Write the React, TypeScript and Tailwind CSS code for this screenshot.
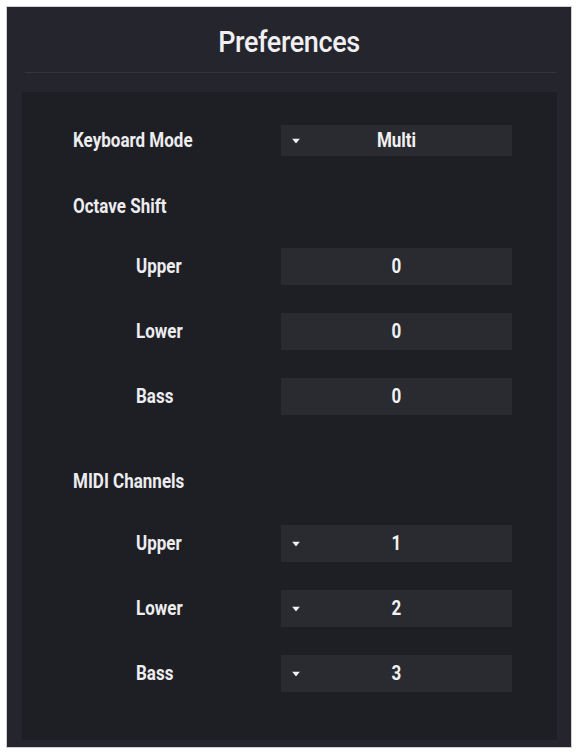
const font = { fontFamily: "Roboto, 'Noto Sans', sans-serif" };

type Row =
  | { kind: "select"; label: string; value: string; indent?: boolean; top: string; tall?: boolean }
  | { kind: "value"; label: string; value: string; top: string }
  | { kind: "heading"; label: string; top: string };

const rows: Row[] = [
  { kind: "select", label: "Keyboard Mode", value: "Multi", top: "mt-[33px]" },
  { kind: "heading", label: "Octave Shift", top: "mt-[36px]" },
  { kind: "value", label: "Upper", value: "0", top: "mt-[26px]" },
  { kind: "value", label: "Lower", value: "0", top: "mt-[28px]" },
  { kind: "value", label: "Bass", value: "0", top: "mt-[28px]" },
  { kind: "heading", label: "MIDI Channels", top: "mt-[52px]" },
  { kind: "select", label: "Upper", value: "1", indent: true, tall: true, top: "mt-[28px]" },
  { kind: "select", label: "Lower", value: "2", indent: true, tall: true, top: "mt-[28px]" },
  { kind: "select", label: "Bass", value: "3", indent: true, tall: true, top: "mt-[28px]" },
];

// the labels in the shot are a tall, narrow face; stretch Roboto a little to match
const labelCls = "inline-block scale-y-[1.18] text-[17px] font-bold text-[#ededf0]";

function Caret() {
  return (
    <svg width="8" height="5" viewBox="0 0 8 5" className="absolute left-[11px] top-1/2 -translate-y-1/2">
      <path d="M0 0 H8 L4 5 Z" fill="#f2f2f2" />
    </svg>
  );
}

function Field({ value, caret, tall }: { value: string; caret?: boolean; tall?: boolean }) {
  return (
    <div
      className={`relative flex w-[231px] items-center justify-center bg-[#2a2a31] text-[17px] font-bold text-[#f2f2f2] ${
        tall ? "h-[37px]" : "h-[31px]"
      }`}
    >
      {caret && <Caret />}
      <span className="inline-block scale-y-[1.18]">{value}</span>
    </div>
  );
}

export default function App() {
  return (
    <div className="h-[754px] w-[578px] bg-white p-[6px]" style={font}>
      <div className="flex h-[742px] flex-col border border-[#d0d0d4] bg-[#25252d]">
        <div className="flex h-[65px] items-center justify-center pt-[6px]">
          <h1 className="inline-block scale-y-[1.12] text-[27px] font-medium tracking-[-0.4px] text-[#f0f0f2]">
            Preferences
          </h1>
        </div>
        <div className="ml-[18px] mr-[15px] h-px bg-[#35353d]" />
        <div className="ml-[15px] mr-[14px] mt-[19px] h-[648px] bg-[#1e1e25]">
          <div className="flex flex-col">
            {rows.map((r, i) => {
              if (r.kind === "heading") {
                return (
                  <div key={i} className={`${r.top} flex h-[30px] items-center pl-[51px]`}>
                    <span className={labelCls}>{r.label}</span>
                  </div>
                );
              }
              const indent = r.kind === "value" || r.indent;
              return (
                <div key={i} className={`${r.top} flex items-center`}>
                  <div className={`w-[259px] ${indent ? "pl-[114px]" : "pl-[51px]"}`}>
                    <span className={labelCls}>{r.label}</span>
                  </div>
                  <Field
                    value={r.value}
                    caret={r.kind === "select"}
                    tall={r.kind === "value" || (r.kind === "select" && r.tall)}
                  />
                </div>
              );
            })}
          </div>
        </div>
      </div>
    </div>
  );
}
